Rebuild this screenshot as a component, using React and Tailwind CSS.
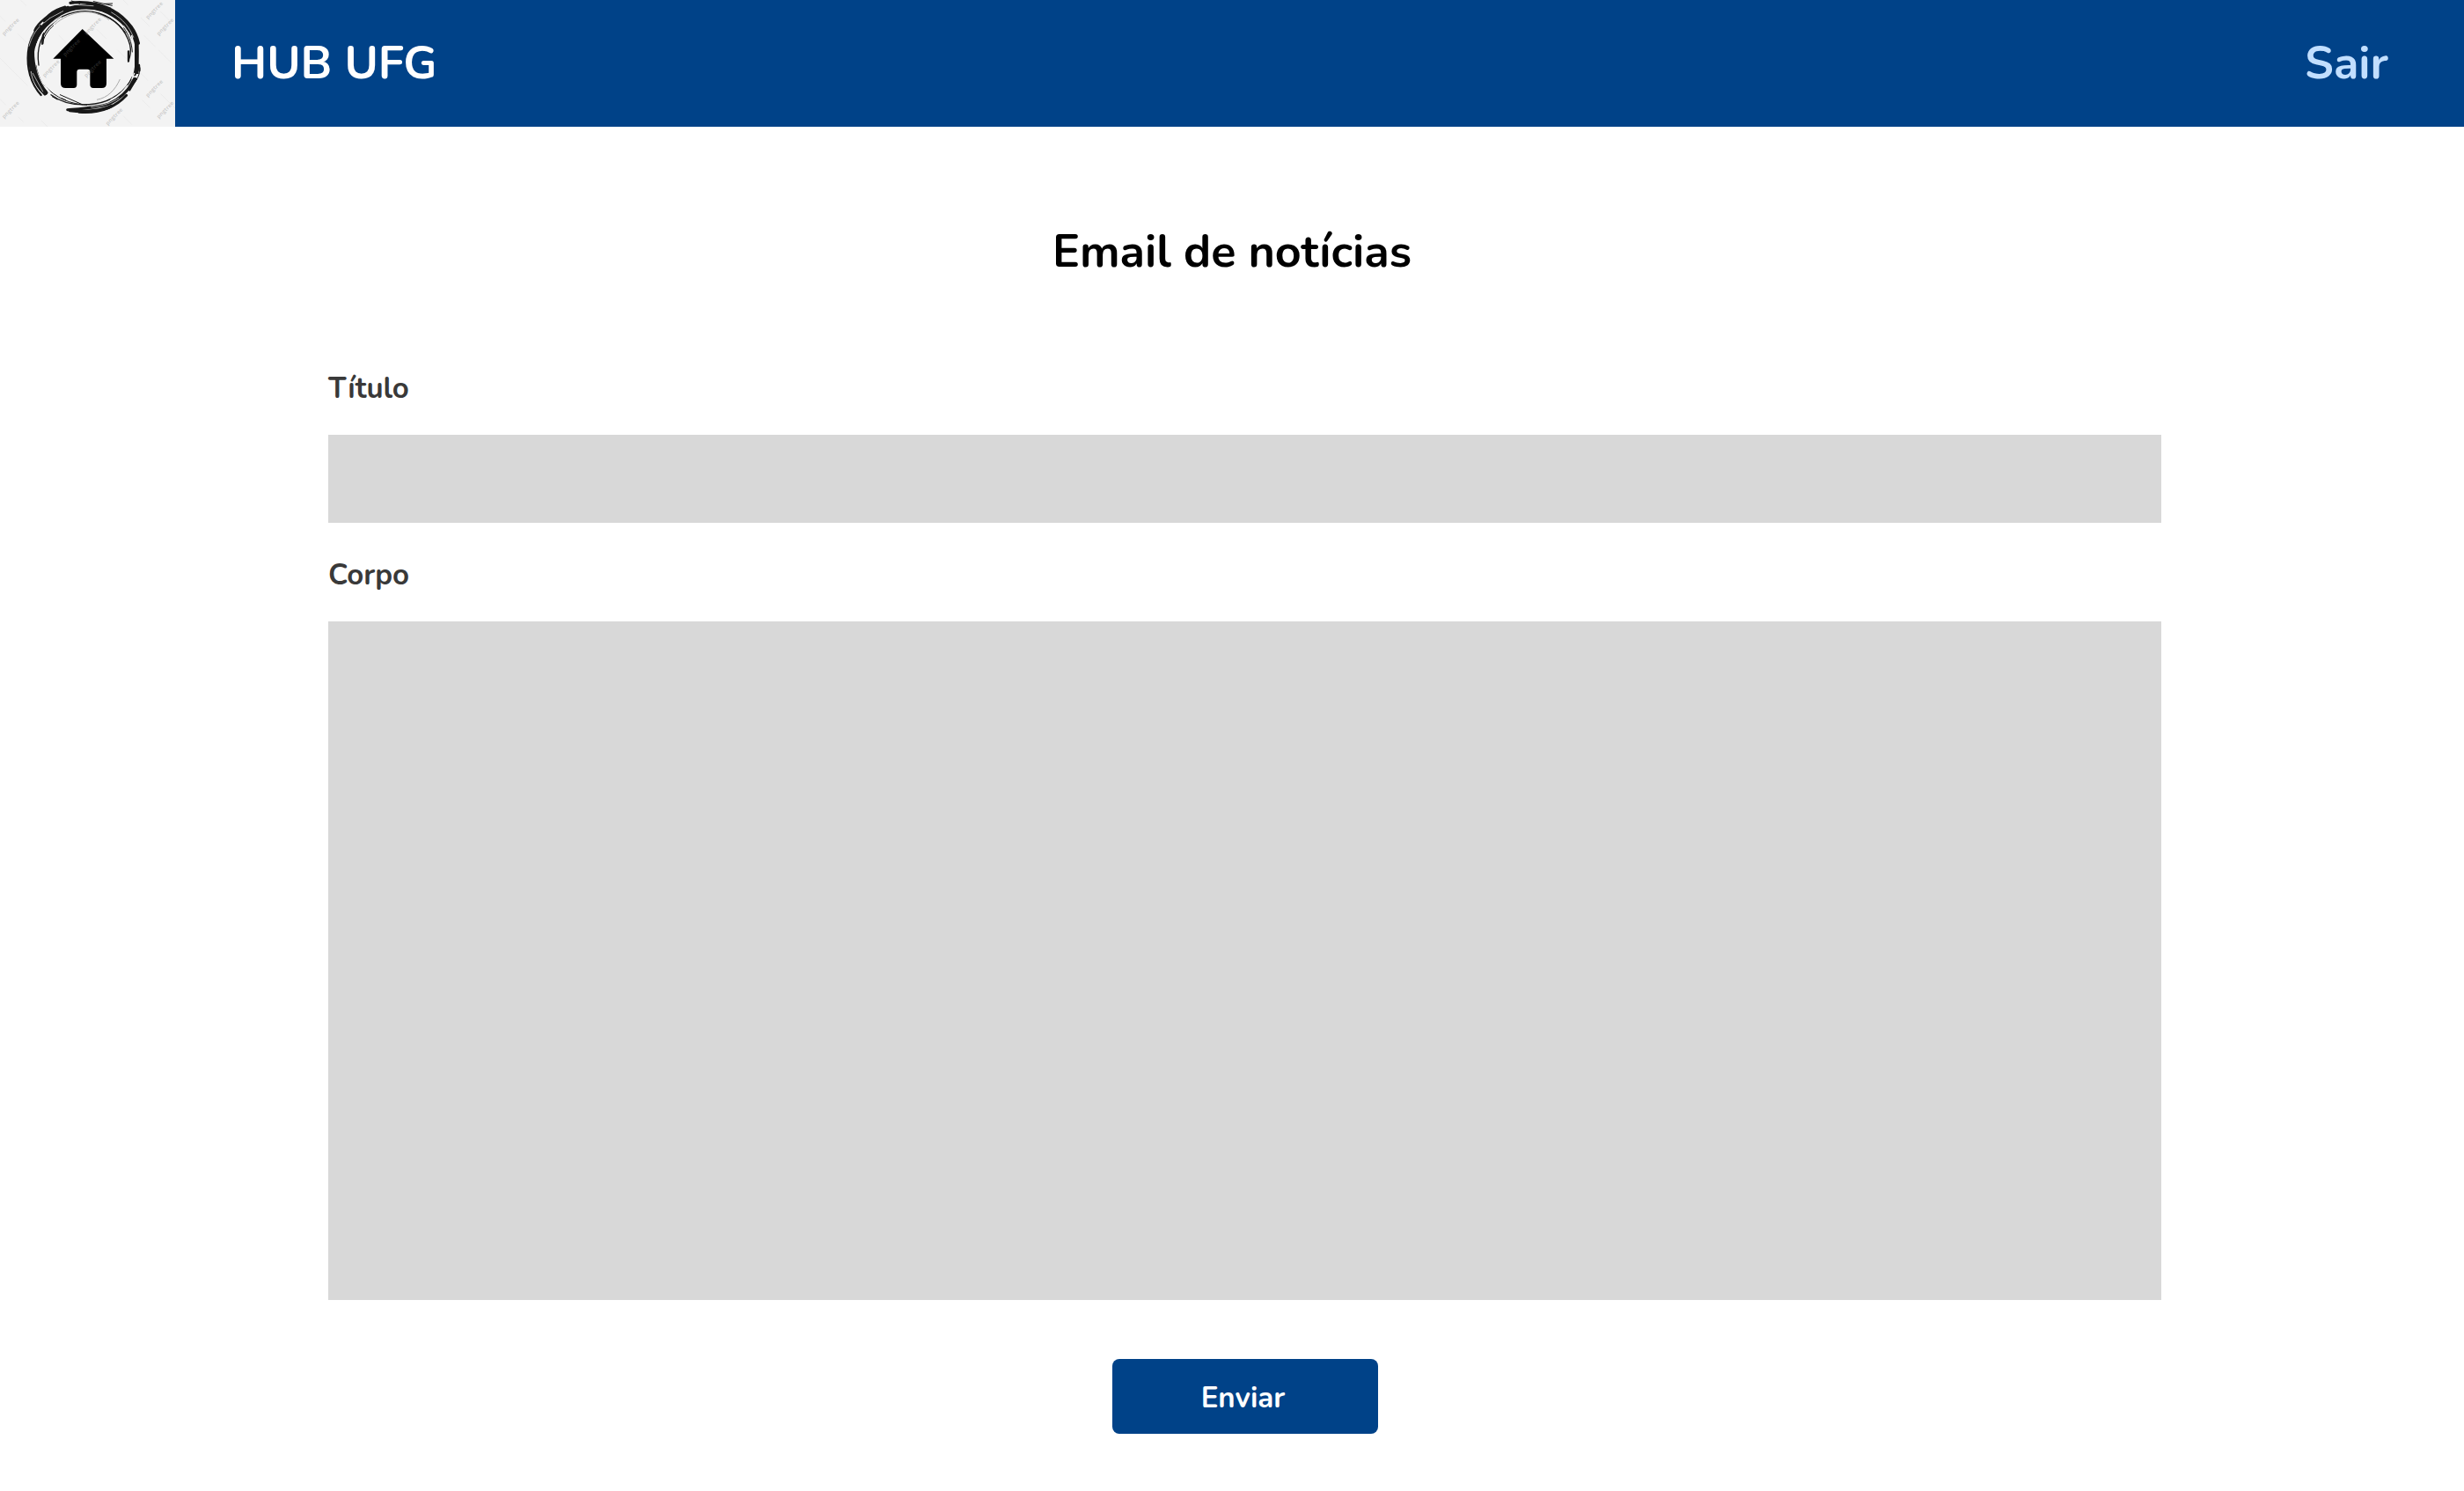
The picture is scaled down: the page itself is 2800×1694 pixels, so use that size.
const WATERMARKS = [
  [37, 92], [245, 163], [317, 90], [527, 36], [564, 92],
  [175, 234], [317, 235], [527, 302], [37, 375], [564, 375], [390, 398],
];

function HomeLogo() {
  return (
    <svg viewBox="0 0 597 432" className="block h-full w-full" aria-hidden="true">
      <rect width="597" height="432" fill="#f3f3f3" />
      <g stroke="#e2e2e2" strokeWidth="1.5" fill="none">
        <path d="M0 55L18 73M60 115L90 145M0 198L95 293M0 338L20 358M62 398L80 416M70 0L90 20M480 60L510 90M490 120L530 160M540 170L585 215M470 240L505 275M548 320L597 369M546 38L580 72M484 340L512 368M420 395L450 425M140 410L162 432M200 120L225 145M190 190L210 210M330 100L362 132M400 170L430 200M270 190L300 220M340 250L370 280M220 260L240 280M420 0L437 17" />
      </g>
      <g fill="none" stroke="#181818" strokeLinecap="round">
        <path strokeWidth="17" d="M154 316C116 282 102 232 107 185C112 128 152 76 204 45C246 21 306 16 350 32C402 52 439 86 458 130" />
        <path strokeWidth="7" d="M140 324C104 285 91 230 96 178C99 144 113 113 133 91M103 258C87 205 99 138 139 88M118 104C130 76 150 68 168 50C181 39 199 29 222 23" />
        <path strokeWidth="10" d="M152 73C174 48 200 34 232 25M240 10C290 4 330 10 375 30M296 11C362 16 414 47 447 91C459 108 467 125 472 147" />
        <path strokeWidth="10" d="M112 170C111 228 130 280 158 316M122 135C134 97 165 66 202 50M430 76C458 113 469 150 467 190C466 216 464 237 459 255" />
        <path strokeWidth="4" d="M132 222C123 164 143 113 184 76C224 42 283 29 337 45C390 62 430 102 443 153C447 172 444 194 437 210M174 323C215 354 270 361 323 354C379 347 430 311 451 262" />
        <path strokeWidth="3" d="M145 150C148 126 163 104 182 87M150 290C190 335 240 355 296 358M160 300C142 278 129 250 124 223M333 47C374 57 408 79 429 113M422 95C438 117 449 143 451 177M477 231C478 254 466 274 454 286" />
        <path strokeWidth="14" strokeLinecap="butt" d="M466 140L466 252M437 308L462 266M132 292L158 322" />
        <path strokeWidth="11" d="M238 376C290 384 350 377 381 361" />
        <path strokeWidth="9" d="M230 374C284 370 331 368 371 354C407 339 438 308 463 269M270 382C337 387 392 367 431 325" />
        <path strokeWidth="7" d="M147 118L145 148M438 175L438 208M474 222L475 240" />
        <path strokeWidth="3" d="M178 329L195 339M210 335L224 341M205 323L280 356M244 3L272 13M319 5L382 19M356 13L383 12M129 112L124 145M149 111L143 151" />
      </g>
      <g fill="none" stroke="#f3f3f3" strokeLinecap="round">
        <path strokeWidth="5" d="M123 184C123 239 145 285 171 316M449 122C459 153 458 195 451 237" />
        <path strokeWidth="4" d="M124 160C134 114 165 82 209 60M378 340C400 330 420 312 434 292M458 250L450 268" />
        <path strokeWidth="2" d="M106 244C110 279 127 303 144 320M99 157C108 126 120 106 135 91M168 63L215 38M254 16L318 20M380 42C423 67 442 96 455 127M311 365C350 362 382 350 405 334M453 264L464 258M112 250L146 312M150 78L168 64M422 87L441 115" />
      </g>
      <path d="M186 84C239 36 315 25 372 68M330 340C367 333 392 308 409 270" fill="none" stroke="#aaaaaa" strokeWidth="3" />
      <path
        d="M281 99L388 200H363V284Q363 300 347 300H318Q307 300 307 289V245Q307 236 298 236H271Q262 236 262 245V289Q262 300 251 300H224Q207 300 207 284V200H181Z"
        fill="#000000"
      />
      <g
        fill="#777777"
        fillOpacity="0.3"
        fontFamily="Open Sans, sans-serif"
        fontSize="19"
        textAnchor="middle"
        dominantBaseline="middle"
      >
        {WATERMARKS.map(([x, y]) => (
          <text key={`${x}-${y}`} x={x} y={y} transform={`rotate(-45 ${x} ${y})`}>
            pngtree
          </text>
        ))}
      </g>
    </svg>
  );
}

export default function App() {
  return (
    <div className="min-h-screen bg-white font-['Nunito','Open_Sans',sans-serif]">
      <header className="flex h-36 items-center bg-[#004288] text-[52px] leading-none font-bold">
        <a href="#inicio" aria-label="Início" className="h-full w-[199px] shrink-0">
          <HomeLogo />
        </a>
        <span className="ml-16 text-white">HUB UFG</span>
        <a href="#sair" className="mr-[86px] ml-auto text-[#c2dfff]">
          Sair
        </a>
      </header>

      <main className="pt-[110px] pb-16">
        <h1 className="text-center text-[52px] leading-[64px] font-bold text-black">Email de notícias</h1>

        <form className="mt-[100px] flex flex-col pr-[344px] pl-[373px]" onSubmit={(e) => e.preventDefault()}>
          <label htmlFor="titulo" className="text-[33px] leading-[48px] font-bold text-[#393939]">
            Título
          </label>
          <input id="titulo" type="text" className="mt-7 h-[100px] bg-[#d8d8d8] px-6 text-[33px] outline-none" />

          <label htmlFor="corpo" className="mt-9 text-[33px] leading-[48px] font-bold text-[#393939]">
            Corpo
          </label>
          <textarea
            id="corpo"
            className="mt-7 h-[771px] resize-none bg-[#d8d8d8] p-6 text-[33px] outline-none"
          />

          <button
            type="submit"
            className="mt-[67px] h-[85px] w-[302px] self-center rounded-lg bg-[#004288] pt-1 pr-1 text-[33px] font-bold text-white"
          >
            Enviar
          </button>
        </form>
      </main>
    </div>
  );
}
